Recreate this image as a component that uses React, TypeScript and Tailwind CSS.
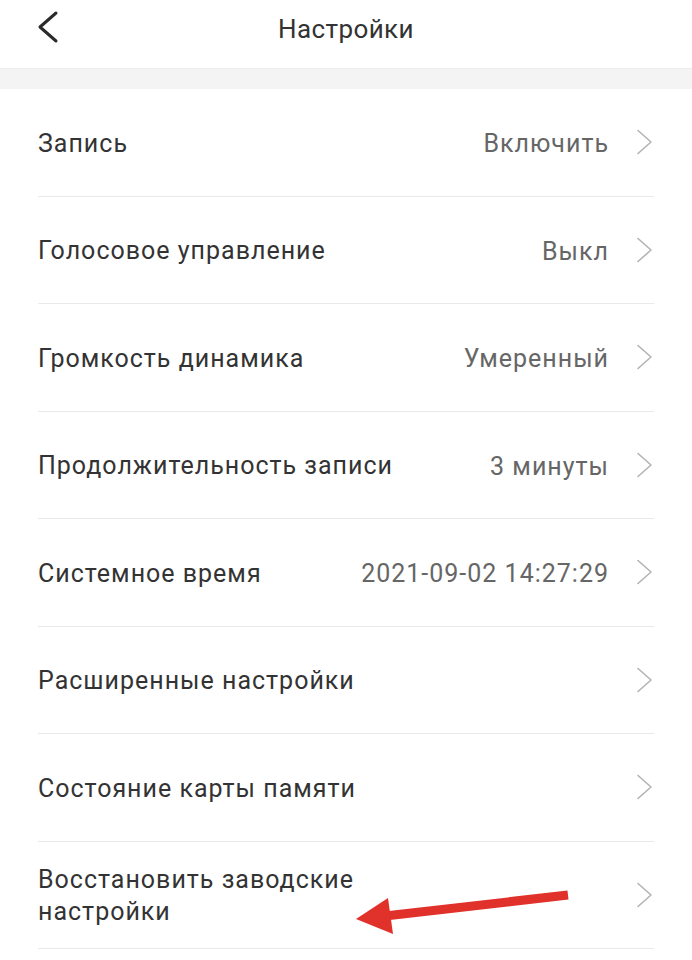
import React from "react";

const rows: { label: string; value?: string }[] = [
  { label: "Запись", value: "Включить" },
  { label: "Голосовое управление", value: "Выкл" },
  { label: "Громкость динамика", value: "Умеренный" },
  { label: "Продолжительность записи", value: "3 минуты" },
  { label: "Системное время", value: "2021-09-02 14:27:29" },
  { label: "Расширенные настройки" },
  { label: "Состояние карты памяти" },
  { label: "Восстановить заводские\nнастройки" },
];

function Chevron() {
  return (
    <svg width="18" height="26" viewBox="0 0 18 26" className="shrink-0">
      <polyline
        points="2,1.5 15,13 2,24.5"
        fill="none"
        stroke="#b3b3b3"
        strokeWidth="1.6"
        strokeLinecap="round"
        strokeLinejoin="round"
      />
    </svg>
  );
}

export default function App() {
  return (
    <div
      className="relative w-[692px] h-[960px] overflow-hidden bg-white"
      style={{ fontFamily: "Roboto, 'Noto Sans', sans-serif" }}
    >
      <header className="relative h-[69px] flex items-center justify-center border-b border-[#ececec]">
        <svg
          width="22"
          height="34"
          viewBox="0 0 22 34"
          className="absolute left-[37px] top-[10px]"
        >
          <polyline
            points="19,3 3,17 19,31"
            fill="none"
            stroke="#2b2b2b"
            strokeWidth="3"
            strokeLinecap="round"
            strokeLinejoin="round"
          />
        </svg>
        <h1 className="text-[26px] text-[#333333] font-normal tracking-[0.4px] -mt-[10px]">
          Настройки
        </h1>
      </header>
      <div className="h-[20px] bg-[#f4f4f4]" />
      <div className="px-[38px]">
        {rows.map((r, i) => (
          <div
            key={i}
            className="h-[107.5px] flex items-center border-b border-[#e9e9e9]"
          >
            <div className="flex-1 pt-[3px] text-[25px] leading-[32px] tracking-[1px] text-[#333333] whitespace-pre-line">
              {r.label}
            </div>
            {r.value && (
              <div className="pt-[3px] text-[25px] tracking-[1px] text-[#666666] mr-[27px]">
                {r.value}
              </div>
            )}
            <Chevron />
          </div>
        ))}
      </div>
      <svg
        className="absolute left-0 top-0 pointer-events-none"
        width="692"
        height="960"
        viewBox="0 0 692 960"
      >
        <line
          x1="568"
          y1="895"
          x2="385"
          y2="916"
          stroke="#e0312b"
          strokeWidth="9"
        />
        <polygon points="356,919 388,898 393,934" fill="#e0312b" />
      </svg>
    </div>
  );
}
